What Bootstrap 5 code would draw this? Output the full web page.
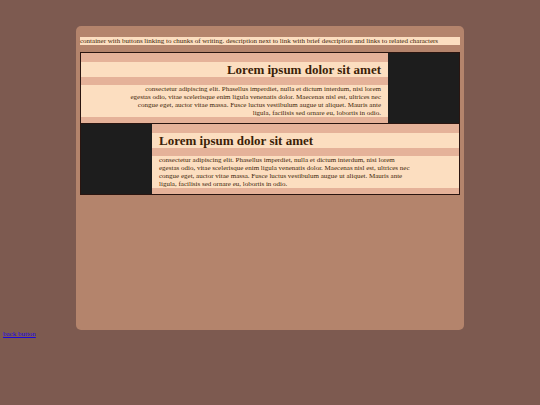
<!DOCTYPE html>
<html lang="en">
<head>
<meta charset="utf-8">
<meta name="viewport" content="width=device-width, initial-scale=1">
<title>Writing</title>
<link href="https://cdn.jsdelivr.net/npm/bootstrap@5.3.0/dist/css/bootstrap.min.css" rel="stylesheet">
<style>
  body { background: #7d5a50; color: #3c1f08; font: 7px/8px "Liberation Serif", "Times New Roman", serif; }
  .panel { margin: 26px 76px 0; min-height: 75vh; padding: 11px 4px; background: #b4846c; border-radius: 5px; }
  .intro, .entry h2, .entry p { background: #fcdec0; }
  .intro { margin-bottom: 7px; }
  .entry { background: #e5b299; border: 1px solid #2a1510; }
  .entry + .entry { border-top: 0; }
  .thumb { width: 71px; background: #1d1d1d; }
  .entry-body { padding: 9px 0 6px; }
  .entry h2 { font-size: 13px; line-height: 15px; font-weight: 700; padding: 0 7px; margin: 0 0 8px; }
  .entry p { padding: 0 7px; margin: 0; }
  .back { color: #1a08dc; margin-left: 3px; }
</style>
</head>
<body>
<main class="panel">
  <p class="intro">container with buttons linking to chunks of writing. description next to link with brief description and links to related characters</p>
  <article class="entry d-flex flex-row-reverse text-end">
    <div class="thumb flex-shrink-0"></div>
    <div class="entry-body flex-grow-1">
      <h2>Lorem ipsum dolor sit amet</h2>
      <p>consectetur adipiscing elit. Phasellus imperdiet, nulla et dictum interdum, nisi lorem<br>egestas odio, vitae scelerisque enim ligula venenatis dolor. Maecenas nisl est, ultrices nec<br>congue eget, auctor vitae massa. Fusce luctus vestibulum augue ut aliquet. Mauris ante<br>ligula, facilisis sed ornare eu, lobortis in odio.</p>
    </div>
  </article>
  <article class="entry d-flex">
    <div class="thumb flex-shrink-0"></div>
    <div class="entry-body flex-grow-1">
      <h2>Lorem ipsum dolor sit amet</h2>
      <p>consectetur adipiscing elit. Phasellus imperdiet, nulla et dictum interdum, nisi lorem<br>egestas odio, vitae scelerisque enim ligula venenatis dolor. Maecenas nisl est, ultrices nec<br>congue eget, auctor vitae massa. Fusce luctus vestibulum augue ut aliquet. Mauris ante<br>ligula, facilisis sed ornare eu, lobortis in odio.</p>
    </div>
  </article>
</main>
<a class="back d-inline-block text-decoration-underline" href="#">back button</a>
<script src="https://cdn.jsdelivr.net/npm/bootstrap@5.3.0/dist/js/bootstrap.bundle.min.js"></script>
</body>
</html>
